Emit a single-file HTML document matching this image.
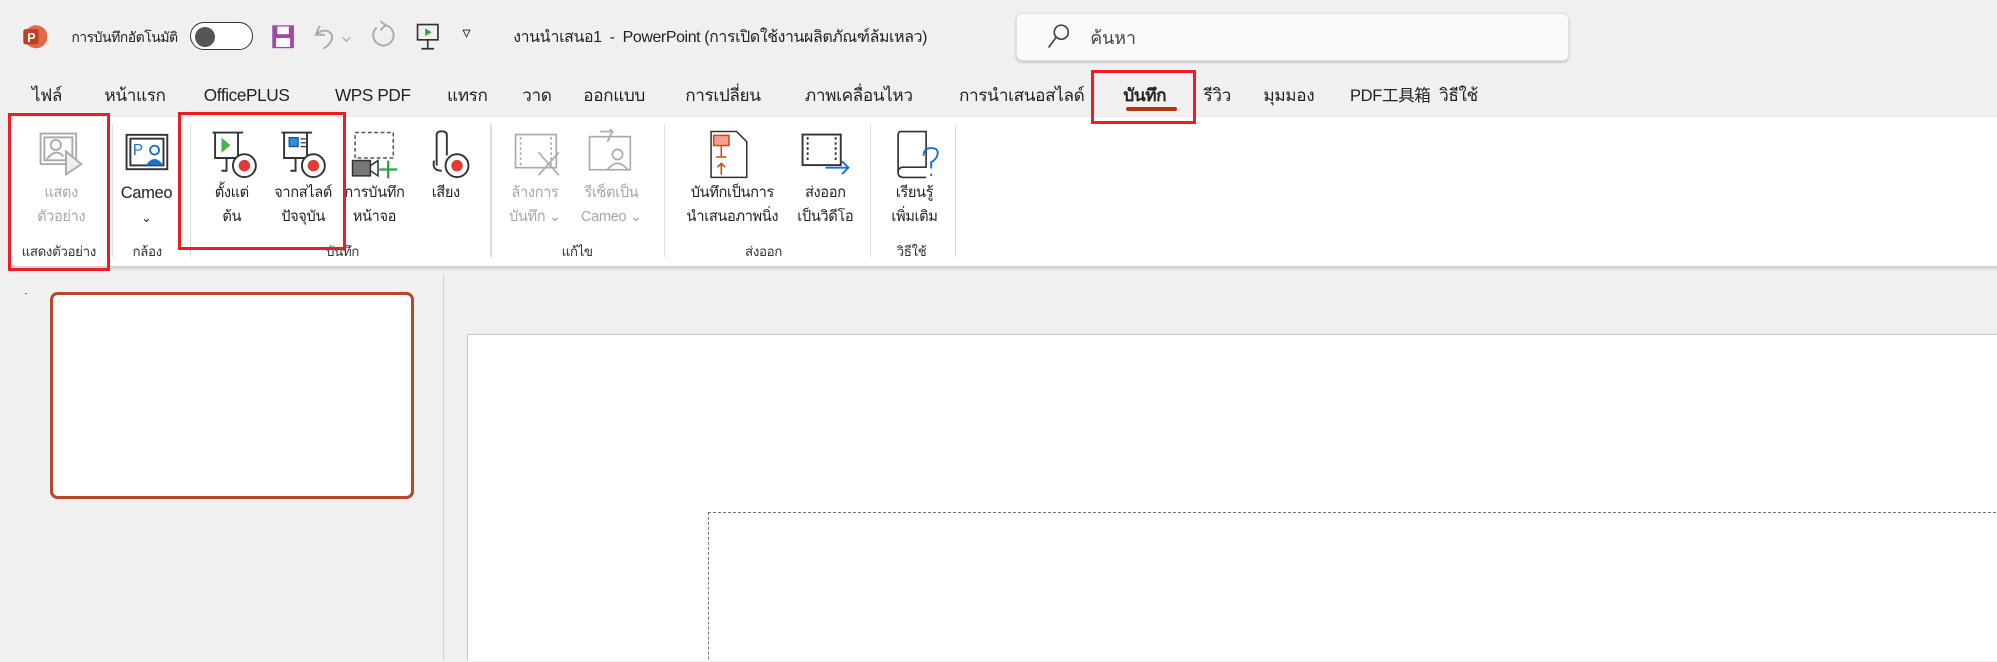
<!DOCTYPE html>
<html><head><meta charset="utf-8"><style>
html,body{margin:0;padding:0;background:#f0f0f0;overflow:hidden;width:1997px;height:662px}
#r{position:relative;width:1568px;height:519px;zoom:1.2736;font-family:"Liberation Sans","Noto Sans CJK SC",sans-serif;color:#222;overflow:hidden}
.a{position:absolute;white-space:nowrap}
.tab{position:absolute;top:65px;font-size:13.5px;line-height:20px;height:20px;color:#222;letter-spacing:-.3px}
.lbl{position:absolute;font-size:11.5px;text-align:center;line-height:19px;color:#222;letter-spacing:-.3px}
.dis{color:#a6a6a6}
.sep{position:absolute;top:98px;width:1px;height:104px;background:#dcdcdc}
.red{position:absolute;border:3px solid #ee1c25;box-sizing:border-box}
.grp{position:absolute;top:189px;font-size:10.5px;color:#333;letter-spacing:-.3px}
</style></head><body><div id="r">
<svg class="a" style="left:17px;top:19px" width="20" height="20" viewBox="0 0 20 20"><circle cx="11" cy="10" r="9" fill="#e06a48"/><rect x="1" y="4" width="12" height="12" rx="2" fill="#c43e1c"/><text x="4" y="14" font-size="10" font-weight="bold" fill="#fff" font-family="Liberation Sans">P</text></svg>
<div class="a" style="left:56px;top:21px;font-size:11px;letter-spacing:-.4px">การบันทึกอัตโนมัติ</div>
<div class="a" style="left:149px;top:17px;width:48px;height:21px;border:1.5px solid #333;border-radius:12px;background:#fff"></div>
<div class="a" style="left:153px;top:21px;width:16px;height:16px;border-radius:50%;background:#555"></div>
<svg class="a" style="left:213px;top:19px" width="19" height="20" viewBox="0 0 19 20"><rect x="1" y="1" width="17" height="18" fill="#a349a4"/><rect x="5" y="2" width="9" height="6" fill="#fff"/><rect x="4" y="11" width="11" height="7" fill="#fff"/></svg>
<svg class="a" style="left:245px;top:17px" width="36" height="24" viewBox="0 0 36 24" fill="none" stroke="#aaa" stroke-width="1.5"><path d="M6 3 L3 10 L10 10 M3 10 Q10 4 15 9 Q18 15 9 21"/><path d="M24 12l3 3 3-3" stroke-width="1"/></svg>
<svg class="a" style="left:290px;top:16px" width="22" height="26" viewBox="0 0 22 26" fill="none" stroke="#aaa" stroke-width="1.5"><path d="M12 4 A8 8 0 1 1 6 6"/><path d="M9 1 L13 4 L9 8"/></svg>
<svg class="a" style="left:326px;top:17px" width="20" height="24" viewBox="0 0 20 24" fill="none" stroke="#333" stroke-width="1.3"><rect x="2" y="2" width="16" height="12"/><path d="M8 5 L13 8 L8 11Z" fill="#2ea043" stroke="none"/><path d="M10 14 V21 M5 21 H15"/></svg>
<div class="a" style="left:363px;top:18px;font-size:13px">▿</div>
<div class="a" style="left:403px;top:20px;font-size:12.5px;letter-spacing:-.3px">งานนำเสนอ1&nbsp; - &nbsp;PowerPoint (การเปิดใช้งานผลิตภัณฑ์ล้มเหลว)</div>
<div class="a" style="left:798px;top:10px;width:432px;height:36px;background:#fafafa;border:1px solid #e2e2e2;border-radius:5px;box-shadow:0 1px 2px rgba(0,0,0,.2)"></div>
<svg class="a" style="left:821px;top:17px" width="20" height="22" viewBox="0 0 20 22" fill="none" stroke="#444" stroke-width="1.3"><circle cx="12" cy="8" r="5.5"/><path d="M8 12 L2 20"/></svg>
<div class="a" style="left:856px;top:19px;font-size:14px;color:#444">ค้นหา</div>
<div class="tab" style="left:25px">ไฟล์</div>
<div class="tab" style="left:82px">หน้าแรก</div>
<div class="tab" style="left:160px">OfficePLUS</div>
<div class="tab" style="left:263px">WPS PDF</div>
<div class="tab" style="left:351px">แทรก</div>
<div class="tab" style="left:410px">วาด</div>
<div class="tab" style="left:458px">ออกแบบ</div>
<div class="tab" style="left:538px">การเปลี่ยน</div>
<div class="tab" style="left:632px">ภาพเคลื่อนไหว</div>
<div class="tab" style="left:753px">การนำเสนอสไลด์</div>
<div class="tab" style="left:882px;font-weight:bold">บันทึก</div>
<div class="a" style="left:884px;top:84px;width:40px;height:3px;border-radius:2px;background:#b0371a"></div>
<div class="tab" style="left:945px">รีวิว</div>
<div class="tab" style="left:992px">มุมมอง</div>
<div class="tab" style="left:1060px;font-size:13px">PDF工具箱</div>
<div class="tab" style="left:1130px">วิธีใช้</div>
<div class="a" style="left:8px;top:92px;width:1570px;height:117px;background:#fff;border-radius:6px 0 0 6px;box-shadow:0 2px 3px rgba(0,0,0,.15)"></div>
<div class="sep" style="left:88px"></div>
<div class="sep" style="left:149px"></div>
<div class="sep" style="left:385px"></div>
<div class="sep" style="left:521px"></div>
<div class="sep" style="left:683px"></div>
<div class="sep" style="left:750px"></div>
<svg class="a" style="left:30px;top:103px" width="36" height="36" viewBox="0 0 36 36" fill="none" stroke="#aaa" stroke-width="1.5"><rect x="2" y="2" width="28" height="24"/><rect x="5" y="5" width="22" height="18"/><circle cx="14" cy="11" r="4"/><path d="M7 22 Q14 13 20 20"/><path d="M22 16 L34 26 L22 34Z" fill="#eee"/></svg>
<svg class="a" style="left:97px;top:103px" width="36" height="36" viewBox="0 0 36 36" fill="none" stroke="#333" stroke-width="1.5"><rect x="2" y="3" width="32" height="27"/><rect x="5" y="6" width="26" height="21"/><text x="7" y="19" font-size="12" fill="#1a73c8" stroke="none" font-family="Liberation Sans">P</text><circle cx="24" cy="15" r="3.5" stroke="#1a73c8" fill="#fff"/><path d="M17 27 Q24 17 31 27Z" fill="#1a73c8" stroke="none"/></svg>
<svg class="a" style="left:165px;top:102px" width="44" height="40" viewBox="0 0 44 40" fill="none" stroke="#333" stroke-width="1.5"><path d="M2 2 H26 M4 2 V22 H22 V2"/><path d="M9 6 L16 12 L9 18Z" fill="#4caf50" stroke="none"/><path d="M13 22 V32 H9"/><circle cx="27" cy="28" r="9" fill="#fff"/><circle cx="27" cy="28" r="4.5" fill="#e53935" stroke="none"/></svg>
<svg class="a" style="left:219px;top:102px" width="44" height="40" viewBox="0 0 44 40" fill="none" stroke="#333" stroke-width="1.5"><path d="M2 2 H26 M4 2 V22 H22 V2"/><rect x="8" y="6" width="7" height="7" fill="#2f8fe0" stroke="#1a4f80" stroke-width="1"/><path d="M17 7 H21 M17 10 H21 M17 13 H21" stroke-width="1"/><path d="M13 22 V32 H9"/><circle cx="27" cy="28" r="9" fill="#fff"/><circle cx="27" cy="28" r="4.5" fill="#e53935" stroke="none"/></svg>
<svg class="a" style="left:275px;top:102px" width="44" height="40" viewBox="0 0 44 40" fill="none" stroke="#555" stroke-width="1.2"><rect x="4" y="2" width="30" height="20" stroke-dasharray="3 2"/><rect x="2" y="24" width="14" height="12" fill="#777" stroke="#333"/><path d="M16 28 L22 24 V36 L16 32" stroke="#333"/><path d="M30 24 V38 M23 31 H37" stroke="#2ea043" stroke-width="1.8"/></svg>
<svg class="a" style="left:337px;top:102px" width="40" height="40" viewBox="0 0 40 40" fill="none" stroke="#333" stroke-width="1.5"><path d="M6 28 V4 Q6 1 10 1 Q14 1 14 4 V20"/><path d="M4 24 Q2 32 10 32"/><circle cx="22" cy="28" r="9" fill="#fff"/><circle cx="22" cy="28" r="4.5" fill="#e53935" stroke="none"/></svg>
<svg class="a" style="left:403px;top:104px" width="40" height="36" viewBox="0 0 40 36" fill="none" stroke="#aaa" stroke-width="1.3"><rect x="2" y="2" width="32" height="26"/><path d="M6 4 V26 M30 4 V26" stroke-dasharray="2 2"/><path d="M20 16 L36 34 M36 16 L20 34"/></svg>
<svg class="a" style="left:461px;top:101px" width="40" height="38" viewBox="0 0 40 38" fill="none" stroke="#aaa" stroke-width="1.3"><rect x="2" y="6" width="32" height="26"/><path d="M10 2 H20 L16 10 M20 2 L16 -2"/><circle cx="24" cy="20" r="4"/><path d="M16 32 Q24 22 32 32"/></svg>
<svg class="a" style="left:554px;top:101px" width="40" height="40" viewBox="0 0 40 40" fill="none" stroke="#333" stroke-width="1.2"><path d="M4 2 H24 L32 10 V38 H4Z"/><rect x="6" y="5" width="12" height="8" fill="#f4a08c" stroke="#d84315"/><path d="M12 13 V22 M8 22 H16" stroke="#d84315"/><path d="M12 36 V27 M9 30 L12 27 L15 30" stroke="#d84315"/></svg>
<svg class="a" style="left:628px;top:104px" width="40" height="36" viewBox="0 0 40 36" fill="none" stroke="#333" stroke-width="1.5"><rect x="2" y="2" width="30" height="24"/><path d="M6 4 V24 M28 4 V24" stroke-dasharray="2 2"/><path d="M20 28 H38 M33 23 L38 28 L33 33" stroke="#1a73c8"/></svg>
<svg class="a" style="left:701px;top:101px" width="40" height="40" viewBox="0 0 40 40" fill="none" stroke="#333" stroke-width="1.3"><path d="M6 2 H26 V30 H8 Q4 30 4 34 Q4 38 8 38 H26 M6 2 Q4 2 4 5 V34"/><path d="M24 21 Q24 15 30 15 Q36 15 35 20 Q34 24 30 26 V31 M30 35 V37" stroke="#1a73c8" stroke-width="1.5"/></svg>
<div class="lbl dis" style="left:26px;top:142px;width:44px">แสดง<br>ตัวอย่าง</div>
<div class="lbl" style="left:90px;top:142px;width:50px;font-size:13px">Cameo<br><span style="font-size:10px">⌄</span></div>
<div class="lbl" style="left:160px;top:142px;width:44px">ตั้งแต่<br>ต้น</div>
<div class="lbl" style="left:210px;top:142px;width:56px">จากสไลด์<br>ปัจจุบัน</div>
<div class="lbl" style="left:266px;top:142px;width:56px">การบันทึก<br>หน้าจอ</div>
<div class="lbl" style="left:330px;top:142px;width:40px">เสียง</div>
<div class="lbl dis" style="left:392px;top:142px;width:56px">ล้างการ<br>บันทึก ⌄</div>
<div class="lbl dis" style="left:450px;top:142px;width:60px">รีเซ็ตเป็น<br>Cameo ⌄</div>
<div class="lbl" style="left:530px;top:142px;width:90px">บันทึกเป็นการ<br>นำเสนอภาพนิ่ง</div>
<div class="lbl" style="left:620px;top:142px;width:56px">ส่งออก<br>เป็นวิดีโอ</div>
<div class="lbl" style="left:690px;top:142px;width:56px">เรียนรู้<br>เพิ่มเติม</div>
<div class="grp" style="left:17px">แสดงตัวอย่าง</div>
<div class="grp" style="left:104px">กล้อง</div>
<div class="grp" style="left:256px">บันทึก</div>
<div class="grp" style="left:441px">แก้ไข</div>
<div class="grp" style="left:585px">ส่งออก</div>
<div class="grp" style="left:704px">วิธีใช้</div>
<div class="red" style="left:6px;top:89px;width:80px;height:124px"></div>
<div class="red" style="left:140px;top:88px;width:132px;height:108px"></div>
<div class="red" style="left:857px;top:55px;width:82px;height:42px"></div>
<div class="a" style="left:348px;top:216px;width:1px;height:304px;background:#d0d0d0"></div>
<div class="a" style="left:20px;top:230px;width:1px;height:1px;background:#b7472a"></div>
<div class="a" style="left:39px;top:229px;width:286px;height:163px;box-sizing:border-box;border:3px solid #b7472a;border-radius:6px;background:#fff"></div>
<div class="a" style="left:367px;top:262px;width:1210px;height:270px;background:#fff;border:1px solid #c8c8c8"></div>
<div class="a" style="left:556px;top:402px;width:1100px;height:200px;border:1px dashed #777"></div>
</div></body></html>
